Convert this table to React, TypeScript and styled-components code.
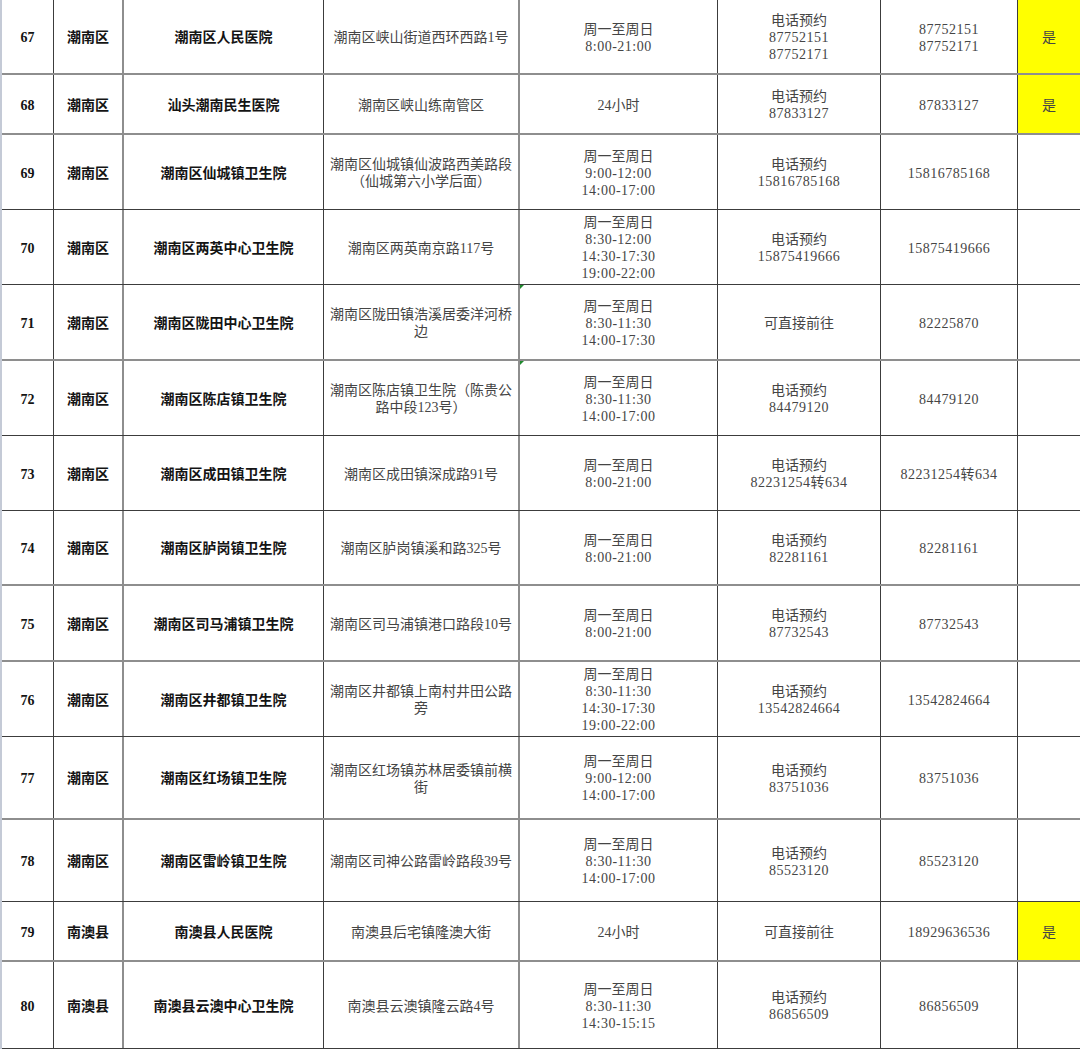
import styled, { createGlobalStyle } from 'styled-components';

type Entry = {
  no: number;
  district: string;
  name: string;
  address: string[];
  hours: string[];
  booking: string[];
  phone: string[];
  open?: boolean;
  height: number;
  soft?: boolean;
  flag?: boolean;
};

const rows: Entry[] = [
  {
    no: 67, district: '潮南区', name: '潮南区人民医院',
    address: ['潮南区峡山街道西环西路1号'],
    hours: ['周一至周日', '8:00-21:00'],
    booking: ['电话预约', '87752151', '87752171'],
    phone: ['87752151', '87752171'],
    open: true, height: 75, soft: true,
  },
  {
    no: 68, district: '潮南区', name: '汕头潮南民生医院',
    address: ['潮南区峡山练南管区'],
    hours: ['24小时'],
    booking: ['电话预约', '87833127'],
    phone: ['87833127'],
    open: true, height: 60, soft: true,
  },
  {
    no: 69, district: '潮南区', name: '潮南区仙城镇卫生院',
    address: ['潮南区仙城镇仙波路西美路段', '（仙城第六小学后面）'],
    hours: ['周一至周日', '9:00-12:00', '14:00-17:00'],
    booking: ['电话预约', '15816785168'],
    phone: ['15816785168'],
    height: 75,
  },
  {
    no: 70, district: '潮南区', name: '潮南区两英中心卫生院',
    address: ['潮南区两英南京路117号'],
    hours: ['周一至周日', '8:30-12:00', '14:30-17:30', '19:00-22:00'],
    booking: ['电话预约', '15875419666'],
    phone: ['15875419666'],
    height: 75,
  },
  {
    no: 71, district: '潮南区', name: '潮南区陇田中心卫生院',
    address: ['潮南区陇田镇浩溪居委洋河桥', '边'],
    hours: ['周一至周日', '8:30-11:30', '14:00-17:30'],
    booking: ['可直接前往'],
    phone: ['82225870'],
    height: 76, soft: true, flag: true,
  },
  {
    no: 72, district: '潮南区', name: '潮南区陈店镇卫生院',
    address: ['潮南区陈店镇卫生院（陈贵公', '路中段123号）'],
    hours: ['周一至周日', '8:30-11:30', '14:00-17:00'],
    booking: ['电话预约', '84479120'],
    phone: ['84479120'],
    height: 75, flag: true,
  },
  {
    no: 73, district: '潮南区', name: '潮南区成田镇卫生院',
    address: ['潮南区成田镇深成路91号'],
    hours: ['周一至周日', '8:00-21:00'],
    booking: ['电话预约', '82231254转634'],
    phone: ['82231254转634'],
    height: 75,
  },
  {
    no: 74, district: '潮南区', name: '潮南区胪岗镇卫生院',
    address: ['潮南区胪岗镇溪和路325号'],
    hours: ['周一至周日', '8:00-21:00'],
    booking: ['电话预约', '82281161'],
    phone: ['82281161'],
    height: 75, soft: true,
  },
  {
    no: 75, district: '潮南区', name: '潮南区司马浦镇卫生院',
    address: ['潮南区司马浦镇港口路段10号'],
    hours: ['周一至周日', '8:00-21:00'],
    booking: ['电话预约', '87732543'],
    phone: ['87732543'],
    height: 76, soft: true,
  },
  {
    no: 76, district: '潮南区', name: '潮南区井都镇卫生院',
    address: ['潮南区井都镇上南村井田公路', '旁'],
    hours: ['周一至周日', '8:30-11:30', '14:30-17:30', '19:00-22:00'],
    booking: ['电话预约', '13542824664'],
    phone: ['13542824664'],
    height: 75,
  },
  {
    no: 77, district: '潮南区', name: '潮南区红场镇卫生院',
    address: ['潮南区红场镇苏林居委镇前横', '街'],
    hours: ['周一至周日', '9:00-12:00', '14:00-17:00'],
    booking: ['电话预约', '83751036'],
    phone: ['83751036'],
    height: 83, soft: true,
  },
  {
    no: 78, district: '潮南区', name: '潮南区雷岭镇卫生院',
    address: ['潮南区司神公路雷岭路段39号'],
    hours: ['周一至周日', '8:30-11:30', '14:00-17:00'],
    booking: ['电话预约', '85523120'],
    phone: ['85523120'],
    height: 82,
  },
  {
    no: 79, district: '南澳县', name: '南澳县人民医院',
    address: ['南澳县后宅镇隆澳大街'],
    hours: ['24小时'],
    booking: ['可直接前往'],
    phone: ['18929636536'],
    open: true, height: 60, soft: true,
  },
  {
    no: 80, district: '南澳县', name: '南澳县云澳中心卫生院',
    address: ['南澳县云澳镇隆云路4号'],
    hours: ['周一至周日', '8:30-11:30', '14:30-15:15'],
    booking: ['电话预约', '86856509'],
    phone: ['86856509'],
    height: 87,
  },
];

// lines made of digits (times, phone numbers) get a bit of tracking
const isNumeric = (s: string) => /^[0-9:\-转]+$/.test(s);

const lines = (list: string[]) =>
  list.map(l => (
    <Line key={l} $num={isNumeric(l)}>
      {l}
    </Line>
  ));

export default function App() {
  return (
    <>
      <GlobalStyle />
      <Sheet>
        {rows.map(r => (
          <Row key={r.no} $height={r.height} $soft={r.soft}>
            <Cell $strong>{r.no}</Cell>
            <Cell $strong $soft>{r.district}</Cell>
            <Cell $strong>{r.name}</Cell>
            <Cell $soft>{lines(r.address)}</Cell>
            <Cell $flag={r.flag}>{lines(r.hours)}</Cell>
            <Cell>{lines(r.booking)}</Cell>
            <Cell>{lines(r.phone)}</Cell>
            <Cell $open={r.open} $last>{r.open ? '是' : ''}</Cell>
          </Row>
        ))}
      </Sheet>
    </>
  );
}

const GlobalStyle = createGlobalStyle`
  html, body {
    margin: 0;
    padding: 0;
    background: #ffffff;
    overflow: hidden;
  }
  body {
    font-family: "Liberation Serif", "Noto Sans CJK SC", serif;
  }
`;

const Sheet = styled.div`
  width: 1080px;
  border-left: 2px solid #c4cad6;
  box-sizing: border-box;
`;

const Row = styled.div<{ $height: number; $soft?: boolean }>`
  display: grid;
  grid-template-columns: 52px 70px 200px 196px 198px 163px 137px 62px;
  height: ${p => p.$height}px;
  box-sizing: border-box;
  border-bottom: ${p => (p.$soft ? '2px solid #8e8e8e' : '1px solid #3c3c3c')};
`;

const Cell = styled.div<{ $strong?: boolean; $soft?: boolean; $open?: boolean; $last?: boolean; $flag?: boolean }>`
  position: relative;
  display: flex;
  flex-direction: column;
  align-items: center;
  justify-content: center;
  text-align: center;
  box-sizing: border-box;
  padding-top: 2px;
  border-right: ${p => (p.$last ? 'none' : p.$soft ? '2px solid #8e8e8e' : '1px solid #3c3c3c')};
  background: ${p => (p.$open ? '#ffff00' : 'transparent')};
  color: ${p => (p.$strong ? '#141414' : '#454545')};
  font-weight: ${p => (p.$strong ? 700 : 400)};
  font-size: 14px;
  line-height: 17px;
  white-space: nowrap;

  &::before {
    content: '';
    display: ${p => (p.$flag ? 'block' : 'none')};
    position: absolute;
    top: 0;
    left: 0;
    border-top: 4px solid #1f8a2e;
    border-right: 4px solid transparent;
  }
`;

const Line = styled.span<{ $num?: boolean }>`
  display: block;
  letter-spacing: ${p => (p.$num ? '0.5px' : 'normal')};
`;
